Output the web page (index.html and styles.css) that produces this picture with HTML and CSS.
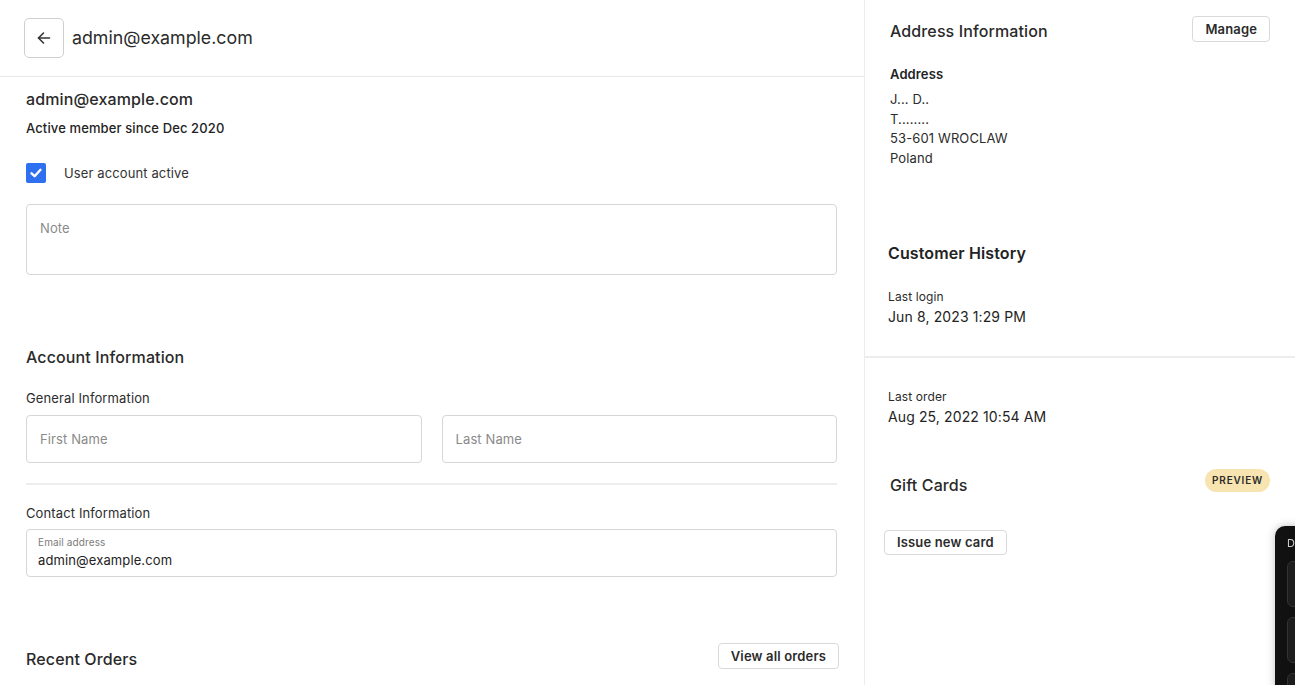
FILE: index.html
```html
<!DOCTYPE html>
<html lang="en">
<head>
<meta charset="utf-8">
<title>admin@example.com</title>
<link rel="stylesheet" href="styles.css">
</head>
<body>
<div class="layout">
  <main class="main">
    <header class="topbar">
      <button class="back" aria-label="Back">
        <svg width="20" height="20" viewBox="0 0 20 20" fill="none" stroke="#333" stroke-width="1.6" stroke-linecap="round" stroke-linejoin="round"><path d="M15.5 10H4.5"/><path d="M9.5 5L4.5 10L9.5 15"/></svg>
      </button>
      <h1 class="title">admin@example.com</h1>
    </header>
    <section class="content">
      <div class="user-email">admin@example.com</div>
      <div class="member-since">Active member since Dec 2020</div>
      <label class="check-row">
        <span class="checkbox"><svg width="14" height="14" viewBox="0 0 14 14" fill="none" stroke="#fff" stroke-width="2.4" stroke-linecap="round" stroke-linejoin="round"><path d="M2.5 7.3L5.6 10.2L11.5 3.8"/></svg></span>
        <span class="check-label">User account active</span>
      </label>
      <div class="note">Note</div>

      <h2 class="section-title">Account Information</h2>
      <div class="field-label">General Information</div>
      <div class="name-row">
        <div class="input">First Name</div>
        <div class="input">Last Name</div>
      </div>
      <hr class="divider">
      <div class="field-label contact">Contact Information</div>
      <div class="email-field">
        <div class="email-label">Email address</div>
        <div class="email-value">admin@example.com</div>
      </div>

      <div class="orders-row">
        <h2 class="section-title orders-title">Recent Orders</h2>
        <button class="btn">View all orders</button>
      </div>
    </section>
  </main>

  <aside class="side">
    <div class="side-block">
      <div class="side-head">
        <h2 class="side-title">Address Information</h2>
        <button class="btn">Manage</button>
      </div>
      <div class="addr-label">Address</div>
      <div class="addr-lines">
        <div>J... D..</div>
        <div>T........</div>
        <div>53-601 WROCLAW</div>
        <div>Poland</div>
      </div>
      <h2 class="history-title">Customer History</h2>
      <div class="meta-label">Last login</div>
      <div class="meta-value">Jun 8, 2023 1:29 PM</div>
    </div>
    <div class="side-block second">
      <div class="meta-label">Last order</div>
      <div class="meta-value">Aug 25, 2022 10:54 AM</div>
      <div class="side-head gift-head">
        <h2 class="side-title gift-title">Gift Cards</h2>
        <span class="pill">PREVIEW</span>
      </div>
      <button class="btn issue">Issue new card</button>
    </div>
  </aside>
</div>

<div class="dev-panel">
  <div class="dev-letter">D</div>
  <div class="dev-box"></div>
  <div class="dev-box"></div>
  <div class="dev-box"></div>
</div>
</body>
</html>
```

FILE: styles.css
```css
html, body {
  margin: 0;
  padding: 0;
  height: 100%;
  overflow: hidden;
  background: #fff;
}
body {
  font-family: Inter, "Noto Sans", "Liberation Sans", sans-serif;
  color: #262626;
  letter-spacing: 0.12px;
}
* { box-sizing: border-box; }

.layout {
  display: flex;
  height: 100%;
}
.main {
  width: 865px;
  flex: none;
  border-right: 1px solid #ececec;
}
.topbar {
  height: 77px;
  display: flex;
  align-items: center;
  padding: 0 24px;
  border-bottom: 1px solid #e8e8e8;
  gap: 8px;
}
.back {
  width: 40px;
  height: 40px;
  border: 1px solid #cfcfcf;
  border-radius: 5px;
  background: #fff;
  display: flex;
  align-items: center;
  justify-content: center;
  padding: 0;
  margin-top: -1px;
}
.title {
  margin: 0;
  font-size: 17.8px;
  font-weight: 400;
  letter-spacing: 0;
  color: #2b2b2b;
  line-height: 24px;
}
.content {
  padding: 10px 27px 0 26px;
}
.user-email {
  font-size: 16px;
  font-weight: 500;
  line-height: 24px;
  color: #2a2a2a;
}
.member-since {
  margin-top: 7px;
  font-size: 13px;
  font-weight: 500;
  line-height: 20px;
  color: #232323;
}
.check-row {
  margin-top: 25px;
  display: flex;
  align-items: center;
  gap: 18px;
  height: 20px;
}
.checkbox {
  width: 20px;
  height: 20px;
  border-radius: 2px;
  background: #2f70f0;
  display: flex;
  align-items: center;
  justify-content: center;
}
.check-label {
  font-size: 13px;
  line-height: 20px;
  color: #333;
}
.note {
  margin-top: 21px;
  height: 71px;
  border: 1px solid #d6d6d6;
  border-radius: 4px;
  padding: 13px 13px;
  font-size: 13px;
  line-height: 20px;
  color: #8a8a8a;
}
.section-title {
  margin: 70px 0 0;
  font-size: 16px;
  font-weight: 500;
  line-height: 24px;
  color: #2a2a2a;
}
.field-label {
  margin-top: 19px;
  font-size: 13px;
  line-height: 20px;
  color: #2d2d2d;
}
.field-label.contact {
  margin-top: 18px;
}
.name-row {
  margin-top: 7px;
  display: grid;
  grid-template-columns: 1fr 1fr;
  gap: 20px;
}
.input {
  height: 48px;
  border: 1px solid #d6d6d6;
  border-radius: 4px;
  padding: 0 13px;
  display: flex;
  align-items: center;
  font-size: 13px;
  color: #8a8a8a;
}
.divider {
  margin: 20px 0 0;
  border: 0;
  height: 2px;
  background: #ededed;
}
.email-field {
  margin-top: 6px;
  height: 48px;
  border: 1px solid #d6d6d6;
  border-radius: 4px;
  padding: 6px 11px 0;
}
.email-label {
  font-size: 10px;
  line-height: 12px;
  color: #7b7b7b;
}
.email-value {
  margin-top: 3px;
  font-size: 13px;
  line-height: 18px;
  color: #232323;
}
.orders-row {
  margin-top: 66px;
  display: flex;
  justify-content: space-between;
  align-items: flex-start;
  margin-right: -2px;
}
.orders-title {
  margin: 4px 0 0;
}
.btn {
  font-family: inherit;
  height: 26px;
  padding: 0 12px;
  border: 1px solid #d9d9d9;
  border-radius: 4px;
  background: #fff;
  font-size: 13px;
  font-weight: 600;
  letter-spacing: 0.15px;
  color: #2b2b2b;
  line-height: 24px;
}

.side {
  flex: 1;
}
.side-block {
  padding: 16px 25px 0 25px;
}
.side-block:first-child {
  height: 358px;
  border-bottom: 2px solid #ececec;
}
.side-head {
  display: flex;
  justify-content: space-between;
  align-items: flex-start;
}
.side-title {
  margin: 3px 0 0;
  font-size: 16px;
  font-weight: 500;
  line-height: 24px;
  color: #2a2a2a;
}
.addr-label {
  margin-top: 21px;
  font-size: 13px;
  font-weight: 600;
  line-height: 20px;
  color: #232323;
}
.addr-lines {
  margin-top: 6px;
  font-size: 13px;
  line-height: 19.5px;
  color: #2b2b2b;
}
.history-title {
  margin: 73px 0 0 -2px;
  font-size: 16px;
  font-weight: 600;
  line-height: 24px;
  color: #232323;
}
.meta-label {
  margin: 24px 0 0 -2px;
  font-size: 12px;
  line-height: 16px;
  color: #2b2b2b;
}
.meta-value {
  margin: 2px 0 0 -2px;
  font-size: 14px;
  line-height: 20px;
  color: #232323;
}
.side-block.second {
  padding-top: 7px;
}
.gift-head {
  margin-top: 42px;
}
.gift-title {
  margin-top: 4px;
}
.pill {
  height: 23px;
  padding: 0 7px;
  border-radius: 12px;
  background: #f8e4b0;
  font-size: 10px;
  font-weight: 600;
  letter-spacing: 0.8px;
  line-height: 23px;
  color: #2b2b2b;
}
.btn.issue {
  margin: 33px 0 0 -6px;
  height: 25px;
  line-height: 23px;
}

.dev-panel {
  position: fixed;
  left: 1275px;
  top: 526px;
  width: 240px;
  height: 200px;
  background: #111;
  border-radius: 10px 0 0 0;
  box-shadow: 0 0 8px rgba(0,0,0,0.25);
  padding: 10px 0 0 12px;
}
.dev-letter {
  font-size: 11px;
  line-height: 14px;
  color: #ccc;
}
.dev-box {
  margin-top: 11px;
  width: 200px;
  height: 46px;
  background: #1d1d1d;
  border: 1px solid #333;
  border-radius: 6px;
}
.dev-box + .dev-box {
  margin-top: 10px;
}
```
